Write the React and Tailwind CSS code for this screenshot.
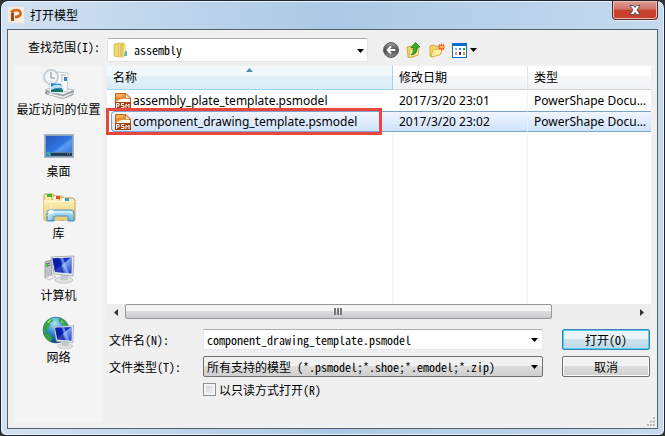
import React, { useState } from 'react';

const places = [
  { label: '最近访问的位置', Icon: RecentIcon },
  { label: '桌面', Icon: DesktopIcon },
  { label: '库', Icon: LibraryIcon },
  { label: '计算机', Icon: ComputerIcon },
  { label: '网络', Icon: NetworkIcon },
];

const files = [
  { name: 'assembly_plate_template.psmodel', date: '2017/3/20 23:01', type: 'PowerShape Docu...' },
  { name: 'component_drawing_template.psmodel', date: '2017/3/20 23:02', type: 'PowerShape Docu...' },
];

function RecentIcon() {
  return (
    <svg width="32" height="32" viewBox="0 0 32 32">
      <path d="M3 22 14 19 31 23 30 27 20 31 2 26z" fill="#8c9094" />
      <path d="M2 22 12 18 31 22 20 27z" fill="#f0f1f2" stroke="#a5a9ad" strokeWidth=".7" />
      <path d="M14 4 25 5 24 24 13 22z" fill="#fff" stroke="#b3bac0" strokeWidth=".7" />
      <path d="M17 7h6M18 9h2M18 11h2M18 13h2" stroke="#a9b0b7" />
      <path d="M21 9h3v4h-3z" fill="#3e82c9" />
      <circle cx="8" cy="9" r="7.2" fill="#e6ebee" stroke="#bcc6cc" strokeWidth="1.4" />
      <circle cx="8" cy="9" r="5.5" fill="#f3f7f9" />
      <path d="M8 4v6h4" stroke="#8d99a2" strokeWidth="1.2" fill="none" />
      <path d="M7 14 19 15 21 25 7 25z" fill="#f8fbfd" stroke="#c4cdd3" strokeWidth=".6" />
      <path d="M8 15 18 16 20 24H8z" fill="#2d86d3" />
      <path d="M8 19q5-4 11-1v2q-6-1-11 2z" fill="#b9e6f8" />
      <path d="M8 22q5-2 12 0v2H8z" fill="#16755f" />
      <path d="M4 24 20 28 30 24v2L20 31 4 26z" fill="#c3c7ca" />
      <path d="M6 26 20 29 28 26" stroke="#fff" strokeWidth=".8" fill="none" />
    </svg>
  );
}

function DesktopIcon() {
  return (
    <svg width="32" height="32" viewBox="0 0 32 32">
      <defs>
        <linearGradient id="desk" x1="0" y1="0" x2="1" y2="1">
          <stop offset="0" stopColor="#2458bd" />
          <stop offset=".5" stopColor="#2f74df" />
          <stop offset=".6" stopColor="#5a9cf2" />
          <stop offset="1" stopColor="#2b6cd0" />
        </linearGradient>
      </defs>
      <rect x="1.500" y="4.500" width="29" height="23" fill="#c2cbd3" stroke="#a9b4be" />
      <rect x="2.500" y="5.500" width="27" height="21" fill="url(#desk)" stroke="#8ba3b8" />
      <rect x="3" y="23" width="26" height="3" fill="#203c57" />
      <path d="M3 22.500h26" stroke="#5580ab" />
      <circle cx="5.500" cy="24" r="2.500" fill="#2498bd" />
      <path d="M4.500 23h1" stroke="#f4d562" />
      <path d="M6 24.500h1" stroke="#8ddc6c" />
      <path d="M24 24h4" stroke="#8496a6" strokeDasharray="1 1" />
    </svg>
  );
}

function LibraryIcon() {
  return (
    <svg width="34" height="32" viewBox="0 0 34 32">
      <defs>
        <linearGradient id="lib" x2="0" y2="1">
          <stop offset="0" stopColor="#fdf0b6" />
          <stop offset="1" stopColor="#e7c971" />
        </linearGradient>
        <linearGradient id="stand" x2="0" y2="1">
          <stop offset="0" stopColor="#c7ecf9" />
          <stop offset="1" stopColor="#65b3d8" />
        </linearGradient>
      </defs>
      <path d="M2 3q0-1 1-1h8l2 2v24H2z" fill="url(#lib)" stroke="#c6a451" />
      <path d="M10 5q0-1 1-1h9l2 2v22H10z" fill="url(#lib)" stroke="#c6a451" />
      <path d="M17 7q0-1 1-1h13l2 2v20H17z" fill="url(#lib)" stroke="#c6a451" />
      <path d="M2 8h15v20H2zM3 9h29v19H3z" fill="url(#lib)" />
      <path d="M2.500 9.500h30" stroke="#fff8d6" />
      <rect x="5" y="2" width="5" height="3" fill="#36b832" />
      <rect x="12" y="4" width="2" height="3" fill="#fff" />
      <rect x="14" y="4" width="4" height="3" fill="#dc5030" />
      <rect x="20" y="6" width="3" height="3" fill="#fff" />
      <rect x="23" y="6" width="4" height="3" fill="#319bdc" />
      <path d="M5 29V20q0-2 2-2h22q3 0 3 3v8h-6v-5H12v5z" fill="url(#stand)" stroke="#4b91b6" />
      <path d="M7 28v-7q0-1 1-1h20q2 0 2 2" fill="none" stroke="#e5f8ff" />
      <path d="M9 13v14M3 20h12M5 16l8 8M13 16l-8 8" stroke="#fff" strokeWidth=".7" opacity=".8" />
      <circle cx="9" cy="20" r="2" fill="#fff" />
    </svg>
  );
}

function Monitor({ id }) {
  return (
    <>
      <defs>
        <linearGradient id={id} x2="1" y2="1">
          <stop offset="0" stopColor="#0720a0" />
          <stop offset=".45" stopColor="#1233d0" />
          <stop offset=".5" stopColor="#7ea5f3" />
          <stop offset="1" stopColor="#1536c9" />
        </linearGradient>
      </defs>
      <ellipse cx="21" cy="26" rx="9" ry="3" fill="#e2e4e6" stroke="#b3b8bc" strokeWidth=".7" />
      <path d="M18 20h7v6h-8z" fill="#c4c9cd" />
      <path d="M8 3 31 2 30 22 11 20z" fill="#e7e9eb" stroke="#9ba1a7" strokeWidth=".8" />
      <path d="M9.500 4.500 29 3.500 28.500 19.500 12 18z" fill={`url(#${id})`} />
      <path d="M9.500 4.500 16 4 21 18.800 12 18z" fill="#0719a2" opacity=".7" />
      <path d="M17 4 20 3.800 26 19.300 23 19z" fill="#bdd4ff" opacity=".5" />
    </>
  );
}

function ComputerIcon() {
  return (
    <svg width="32" height="32" viewBox="0 0 32 32">
      <path d="M2 8 8 6 9 23 2 24z" fill="#bdc3c7" stroke="#7d848a" strokeWidth=".7" />
      <path d="M3 10 7 9M3 12 7 11" stroke="#596167" />
      <rect x="3" y="10" width="2" height="3" fill="#42c638" />
      <path d="M2 23 9 21 13 23 6 26z" fill="#eef0f1" stroke="#a9aeb3" strokeWidth=".7" />
      <Monitor id="pc" />
    </svg>
  );
}

function NetworkIcon() {
  return (
    <svg width="33" height="33" viewBox="0 0 33 33">
      <defs>
        <radialGradient id="globe" cx=".45" cy=".25" r=".75">
          <stop offset="0" stopColor="#b1e8fa" />
          <stop offset=".45" stopColor="#3595d0" />
          <stop offset="1" stopColor="#0a3f87" />
        </radialGradient>
      </defs>
      <circle cx="14" cy="14" r="13" fill="url(#globe)" stroke="#23659c" strokeWidth=".6" />
      <path d="M2 10q2-6 8-8l1 3-3 2-1 4-2 2-1 4-3-1zM17 2q6 1 9 7l-4 1-2-3-3-1zM2 17l5 1 3 4-1 4q-6-2-7-9z" fill="#36a43c" />
      <path d="M5 7q2-4 5-4l-3 4zM19 4l3 3-3-1z" fill="#9ee373" />
      <g transform="translate(5 8) scale(.86)">
        <Monitor id="net" />
      </g>
    </svg>
  );
}

function FileIcon() {
  return (
    <svg width="16" height="16" viewBox="0 0 16 16" className="shrink-0">
      <path d="M.5.5H11L15.500 5v10.500H.5z" fill="#fff" stroke="#c3671c" />
      <path d="M1 1h10l-1 5Q6 5 1 9z" fill="#e88b2d" />
      <path d="M1 4Q7 5 10 1H1z" fill="#f4ad57" />
      <path d="M10.500 1v4.500h4.500z" fill="#fff3df" stroke="#c3671c" strokeWidth=".7" />
      <rect y="9" width="16" height="7" fill="#a4430f" />
      <path d="M1.500 15v-4.500H4v2.500H1.500M9 10.500H6.500v2H9v2H6M11 15v-4l1.500 2 1.500-2v4" stroke="#fff" fill="none" />
    </svg>
  );
}

function LogoIcon() {
  return (
    <svg width="16" height="16" viewBox="0 0 16 16">
      <rect width="16" height="16" fill="#f9ebe0" />
      <path d="M4.500 14V5.500" stroke="#a94a16" strokeWidth="3" fill="none" />
      <path d="M3 5q2-2 6-2 4 .5 3.500 4-1 3-5.500 3" stroke="#c8651d" strokeWidth="2.600" fill="none" />
      <path d="M3 3.500Q7 1.500 10 2.500" stroke="#e28a3c" fill="none" />
    </svg>
  );
}

function FolderIcon() {
  return (
    <svg width="16" height="16" viewBox="0 0 16 16">
      <path d="M1 2 6 1v14l-5-1z" fill="#ecd877" stroke="#cbb04b" strokeWidth=".7" />
      <path d="M6 1h5v14H6z" fill="#f6e99d" stroke="#d5bd5c" strokeWidth=".7" />
      <path d="M7 2 12 1v12l-5 2z" fill="#dfc65d" />
      <path d="M11 2h2v12h-3z" fill="#f4e591" />
      <path d="M12 9h2v5h-3z" fill="#66b3ba" />
    </svg>
  );
}

function BackIcon() {
  return (
    <svg width="16" height="16" viewBox="0 0 16 16">
      <defs>
        <linearGradient id="back" x2="0" y2="1">
          <stop offset="0" stopColor="#a9a9a9" />
          <stop offset=".5" stopColor="#4b4b4b" />
          <stop offset="1" stopColor="#969696" />
        </linearGradient>
      </defs>
      <circle cx="8" cy="8" r="7.400" fill="url(#back)" stroke="#555" />
      <path d="M12.500 8H5M8 4.500 4.500 8 8 11.500" fill="none" stroke="#fff" strokeWidth="1.800" />
    </svg>
  );
}

function UpIcon() {
  return (
    <svg width="16" height="16" viewBox="0 0 16 16">
      <path d="M1 5 5 4l1 1h6v8l-8 3-2-1z" fill="#f2d466" stroke="#c5a033" strokeWidth=".8" />
      <path d="M4 8 13 6 12 13 3 15.500z" fill="#fdeea0" stroke="#cfaa3e" strokeWidth=".7" />
      <path d="M5 13q3-2 2.500-7.500H5L9.500.5 14 5h-3q1 7-6 8z" fill="#33af28" stroke="#187817" strokeWidth=".8" />
    </svg>
  );
}

function NewFolderIcon() {
  return (
    <svg width="16" height="16" viewBox="0 0 16 16">
      <path d="M1 4 5 3l1 1h6v8l-9 3-2-1z" fill="#f2d466" stroke="#c5a033" strokeWidth=".8" />
      <path d="M4 8 14 6 11 13 2 15z" fill="#fdeea0" stroke="#cfaa3e" strokeWidth=".7" />
      <path d="M12.500 1.500v7M9 5h7M10 2.500l5 5M15 2.500l-5 5" stroke="#f04a20" strokeWidth="1.200" />
      <circle cx="12.500" cy="5" r="1.500" fill="#ffd663" />
    </svg>
  );
}

function ViewIcon() {
  return (
    <svg width="15" height="15" viewBox="0 0 15 15" shapeRendering="crispEdges">
      <rect width="15" height="15" rx="1" fill="#0b6bd1" />
      <rect x="1" y="3" width="13" height="11" fill="#fff" />
      <rect x="3" y="5" width="2" height="2" fill="#a9a6c7" />
      <rect x="7" y="5" width="2" height="2" fill="#4b88db" />
      <rect x="11" y="5" width="2" height="2" fill="#239735" />
      <rect x="3" y="9" width="2" height="3" fill="#ee8561" />
      <rect x="7" y="9" width="2" height="3" fill="#183b91" />
      <rect x="11" y="9" width="2" height="3" fill="#c3a025" />
    </svg>
  );
}

const Caret = ({ className }) => (
  <svg width="7" height="4" viewBox="0 0 7 4" className={className}>
    <path d="M0 0h7L3.500 4z" fill="#000" />
  </svg>
);

const TitleBar = () => (
  <header className="h-7 shrink-0 flex items-start justify-between">
    <div className="flex items-center gap-1.5 pl-px pt-1">
      <LogoIcon />
      <h1 className="text-xs leading-5">打开模型</h1>
    </div>
    <button
      aria-label="关闭"
      className="w-[46px] h-[19px] flex items-center justify-center rounded-b border border-t-0 border-[#5c2a2e] bg-linear-to-b from-[#dd9f97] from-0% via-[#cf7468] via-45% to-[#c8412c] to-50% shadow-[inset_0_0_0_1px_#efb9ac,0_1px_0_#e8eff8]"
    >
      <svg width="12" height="10" viewBox="0 0 12 10">
        <path d="M1 .5h3.500L6 2.500 7.500.5H11L8 5l3 4.500H7.500L6 7.500l-1.500 2H1L4 5z" fill="#fff" stroke="#575966" />
      </svg>
    </button>
  </header>
);

const Toolbar = () => (
  <div className="h-8 flex items-center text-xs">
    <label htmlFor="lookin" className="w-[93px] pl-3.5 pb-1.5 leading-5">
      查找范围(I):
    </label>
    <div className="relative w-[261px] h-6">
      <select
        id="lookin"
        className="w-full h-full appearance-none pl-[26px] bg-white border border-[#e3e3ea] border-t-[#abadb3] rounded-xs"
      >
        <option>assembly</option>
      </select>
      <span className="absolute left-1.5 top-1 pointer-events-none">
        <FolderIcon />
      </span>
      <Caret className="absolute right-1 top-[11px] pointer-events-none" />
    </div>
    <div className="flex items-center gap-[7px] pl-[15px]">
      <button aria-label="后退"><BackIcon /></button>
      <button aria-label="向上一级"><UpIcon /></button>
      <button aria-label="新建文件夹"><NewFolderIcon /></button>
      <button aria-label="视图" className="flex items-center gap-[3px]">
        <ViewIcon />
        <Caret />
      </button>
    </div>
  </div>
);

const Sidebar = () => (
  <nav className="w-[89px] shrink-0 bg-[#f4f4f4] flex flex-col gap-3 pt-0.5 font-['Noto_Sans','Noto_Sans_CJK_SC',sans-serif]">
    {places.map(({ label, Icon }) => (
      <button key={label} className="h-[50px] flex flex-col items-center justify-between text-xs whitespace-nowrap">
        <Icon />
        <span className="leading-4">{label}</span>
      </button>
    ))}
  </nav>
);

const FileTable = ({ selected, onSelect }) => (
  <div className="flex-1 min-h-0 bg-white font-['Noto_Sans','Noto_Sans_CJK_SC',sans-serif]">
    <table className="w-full h-full table-fixed border-separate border-spacing-0 text-xs text-left">
      <thead>
        <tr className="h-6">
          <th className="relative w-[286px] p-0 pl-1.5 font-normal border-r border-b border-[#96d9f9] bg-linear-to-b from-[#f2f9fc] from-40% via-[#e1f1f9] via-45% to-[#d8ecf6]">
            名称
            <svg width="7" height="4" viewBox="0 0 7 4" className="absolute left-[139px] top-0.5">
              <path d="M0 4h7L3.500 0z" fill="#4d8fae" />
            </svg>
          </th>
          <th className="w-[135px] p-0 pl-1.5 font-normal border-r border-b border-[#e0e3e8] border-b-[#d5d5d5] bg-linear-to-b from-white from-40% via-[#f7f8fa] via-45% to-[#f1f2f4]">
            修改日期
          </th>
          <th className="p-0 pl-1.5 font-normal border-b border-[#d5d5d5] bg-linear-to-b from-white from-40% via-[#f7f8fa] via-45% to-[#f1f2f4]">
            类型
          </th>
        </tr>
      </thead>
      <tbody>
        {files.map((file, i) => {
          const active = i === selected;
          const cell = active
            ? 'border-y border-y-[#7da2ce] bg-linear-to-b from-[#f0f6fe] to-[#cfe2fc]'
            : 'border-y border-y-transparent';
          return (
            <tr key={file.name} className="h-[21px] leading-[19px]" onClick={() => onSelect(i)}>
              <td className="relative p-0 pl-1">
                <div className={`h-[21px] flex items-center gap-0.5 pl-[3px] ${cell} ${active ? 'rounded-l-sm border-l border-l-[#7da2ce]' : 'border-l border-l-transparent'}`}>
                  <FileIcon />
                  {file.name}
                </div>
                {active && <div className="absolute -left-px right-[11px] -inset-y-[3px] border-3 border-[#e8473f]" />}
              </td>
              <td className={`p-0 pl-1.5 border-r border-r-[#edf3fb] ${cell}`}>{file.date}</td>
              <td className={`p-0 pl-1.5 whitespace-nowrap ${cell}`}>{file.type}</td>
            </tr>
          );
        })}
        <tr>
          <td className="border-r border-[#edf3fb]" />
          <td className="border-r border-[#edf3fb]" />
          <td />
        </tr>
      </tbody>
    </table>
  </div>
);

const ScrollBar = () => (
  <div className="h-4 shrink-0 flex bg-[#ededed]">
    <button aria-label="向左滚动" className="w-[18px] flex items-center justify-center">
      <svg width="4" height="7" viewBox="0 0 4 7"><path d="M4 0v7L0 3.500z" fill="#333" /></svg>
    </button>
    <div className="flex-1">
      <div className="w-[84%] h-[15px] flex items-center justify-center gap-px border border-[#979797] rounded-xs bg-linear-to-b from-[#f5f5f5] from-45% via-[#dcdcde] via-50% to-[#cacacd]">
        <i className="w-0.5 h-[7px] bg-[#77777a]" />
        <i className="w-0.5 h-[7px] bg-[#77777a]" />
        <i className="w-0.5 h-[7px] bg-[#77777a]" />
      </div>
    </div>
    <button aria-label="向右滚动" className="w-[18px] flex items-center justify-center">
      <svg width="4" height="7" viewBox="0 0 4 7"><path d="M0 0v7l4-3.500z" fill="#333" /></svg>
    </button>
  </div>
);

const Fields = ({ name, onName }) => (
  <form
    className="pt-[9px] pb-[26px] pr-px grid grid-cols-[96px_1fr_88px] gap-y-1.5 items-center text-xs"
    onSubmit={(e) => e.preventDefault()}
  >
    <label htmlFor="filename" className="pl-0.5">
      文件名(N):
    </label>
    <div className="relative mr-[19px] h-[21px]">
      <input
        id="filename"
        value={name}
        onChange={(e) => onName(e.target.value)}
        className="w-full h-full px-[3px] bg-white border border-[#e3e9ef] border-t-[#abadb3]"
      />
      <Caret className="absolute right-[5px] top-[9px] pointer-events-none" />
    </div>
    <button
      type="submit"
      className="h-[21px] rounded-xs border border-[#3c7fb1] bg-linear-to-b from-[#eaf3f8] from-45% via-[#cfe3ee] via-50% to-[#bcd9e8] shadow-[inset_0_0_0_1px_#48d1f5]"
    >
      打开(O)
    </button>

    <label htmlFor="filetype" className="pl-0.5">
      文件类型(T):
    </label>
    <div className="relative mr-[19px] h-[21px]">
      <select
        id="filetype"
        className="w-full h-full appearance-none pl-[3px] rounded-xs border border-[#707070] bg-linear-to-b from-[#f1f1f1] from-45% via-[#dcdcdc] via-50% to-[#cfcfcf]"
      >
        <option>所有支持的模型 (*.psmodel;*.shoe;*.emodel;*.zip)</option>
      </select>
      <Caret className="absolute right-[5px] top-[9px] pointer-events-none" />
    </div>
    <button
      type="button"
      className="h-[21px] rounded-xs border border-[#707070] bg-linear-to-b from-[#f2f2f2] from-45% via-[#dddddd] via-50% to-[#cfcfcf] shadow-[inset_0_0_0_1px_#fafafa]"
    >
      取消
    </button>

    <label className="col-start-2 h-[13px] flex items-center gap-[3px] leading-[13px]">
      <input
        type="checkbox"
        className="appearance-none size-[13px] border border-[#8e8f8f] bg-linear-to-br from-[#cbcfd5] to-[#f6f6f6] shadow-[inset_0_0_0_2px_#f4f4f4] checked:from-[#2c63c8]"
      />
      以只读方式打开(R)
    </label>
  </form>
);

const App = () => {
  const [selected, setSelected] = useState(1);
  const [name, setName] = useState(files[1].name);

  const handleSelect = (i) => {
    setSelected(i);
    setName(files[i].name);
  };

  return (
    <div className="h-screen bg-[#333] font-['Noto_Sans_Mono_CJK_SC','Noto_Sans_CJK_SC',monospace] text-black">
      <div className="h-full flex flex-col px-1.5 pb-1.5 border border-[#20242c] rounded-t-lg rounded-b-md bg-linear-to-r from-[#d3e2f2] via-[#abc9e5] via-50% to-[#c5daee] shadow-[inset_0_0_0_1px_#eaf3fb]">
        <TitleBar />
        <main className="flex-1 min-h-0 flex flex-col border border-[#53606d] bg-[#f0f0f0] pt-1 pl-1.5 pr-1.5 pb-1.5 relative">
          <Toolbar />
          <div className="flex-1 min-h-0 flex gap-1">
            <Sidebar />
            <section className="flex-1 min-w-0 flex flex-col">
              <FileTable selected={selected} onSelect={handleSelect} />
              <ScrollBar />
              <Fields name={name} onName={setName} />
            </section>
          </div>
          <svg width="9" height="9" viewBox="0 0 9 9" className="absolute right-0.5 bottom-0.5">
            <path d="M7 0h2v2H7zM4 3.500h2v2H4zM7 3.500h2v2H7zM1 7h2v2H1zM4 7h2v2H4zM7 7h2v2H7z" fill="#b8b8b8" />
          </svg>
        </main>
      </div>
    </div>
  );
};

export default App;
